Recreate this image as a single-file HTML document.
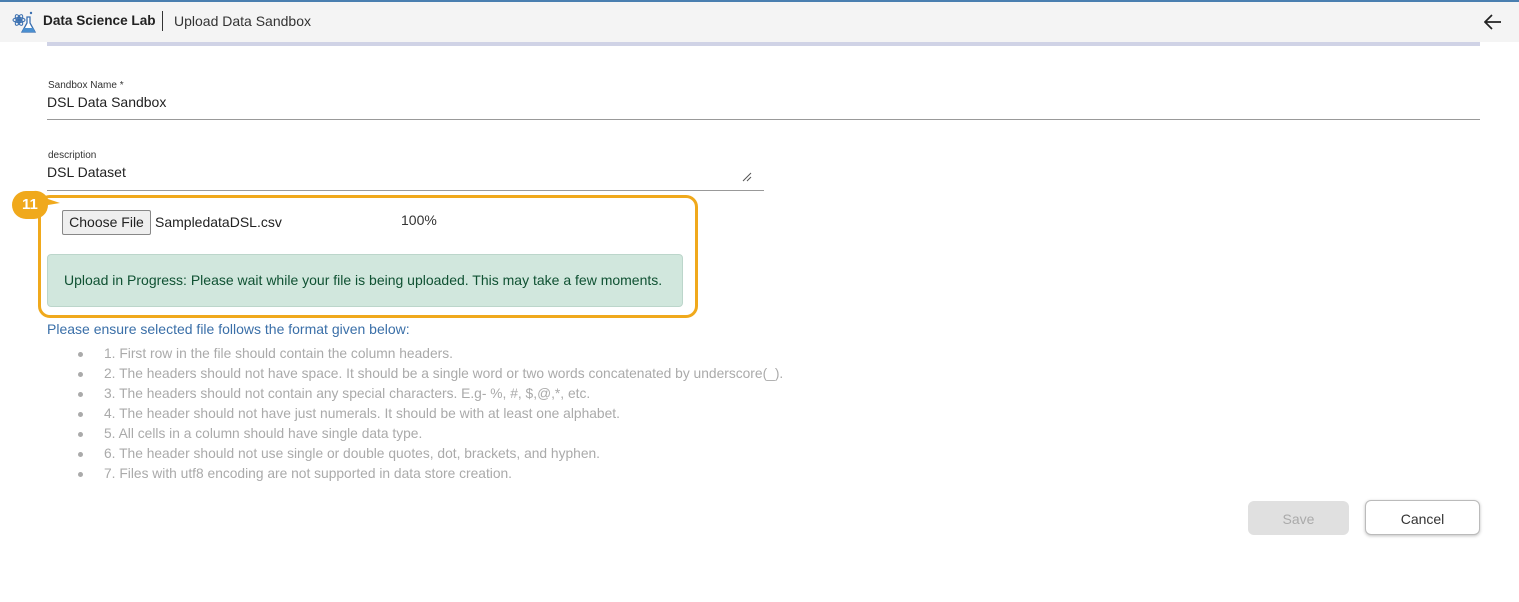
<!DOCTYPE html>
<html><head><meta charset="utf-8"><style>
*{margin:0;padding:0;box-sizing:border-box}
body{width:1519px;height:602px;background:#fff;font-family:"Liberation Sans",sans-serif;position:relative;overflow:hidden;color:#222}
.hdr{position:absolute;left:0;top:0;width:1519px;height:42px;background:#f4f4f4;border-top:2px solid #4a7fb0}
.lav{position:absolute;left:47px;top:42px;width:1433px;height:4px;background:#d0d3e6}
.ab{position:absolute;white-space:nowrap}
.line{position:absolute;height:1px;background:#999}
.lbl{font-size:10px;color:#333}
.val{font-size:14px;color:#222}
li{list-style:none;position:relative;margin-left:-28px;padding-left:28px;height:20px;line-height:20px;font-size:13.8px;color:#aaa}
li:before{content:"";position:absolute;left:2px;top:8px;width:5px;height:5px;border-radius:50%;background:#aaa}
</style></head><body>
<div class="hdr"></div>
<div class="lav"></div>
<svg class="ab" style="left:12px;top:10px" width="26" height="26" viewBox="0 0 26 26">
<circle cx="7" cy="10" r="2" fill="#3a6fb0"/><ellipse cx="7" cy="10" rx="6" ry="2.5" fill="none" stroke="#3a6fb0" stroke-width="1"/><ellipse cx="7" cy="10" rx="6" ry="2.5" fill="none" stroke="#3a6fb0" stroke-width="1" transform="rotate(60 7 10)"/><ellipse cx="7" cy="10" rx="6" ry="2.5" fill="none" stroke="#3a6fb0" stroke-width="1" transform="rotate(-60 7 10)"/>
<path d="M15 7v6l-5 9h13l-5-9V7z" fill="#fff" stroke="#3a6fb0" stroke-width="1.3"/><path d="M12 18h9l2 4H10z" fill="#4a8fd0"/><circle cx="19" cy="3" r="1.2" fill="#3a6fb0"/></svg>
<div class="ab" style="left:43px;top:13px;font-size:13.6px;font-weight:bold;color:#222">Data Science Lab</div>
<div class="ab" style="left:162px;top:11px;width:1px;height:20px;background:#333"></div>
<div class="ab" style="left:174px;top:13px;font-size:14px;color:#333">Upload Data Sandbox</div>
<svg class="ab" style="left:1484px;top:14px" width="18" height="16" viewBox="0 0 18 16"><path d="M17 8H2M8 1L1 8l7 7" fill="none" stroke="#222" stroke-width="1.7"/></svg>

<div class="ab lbl" style="left:48px;top:80px">Sandbox Name *</div>
<div class="ab val" style="left:47px;top:94px">DSL Data Sandbox</div>
<div class="line" style="left:47px;top:119px;width:1433px"></div>

<div class="ab lbl" style="left:48px;top:150px">description</div>
<div class="ab val" style="left:47px;top:164px">DSL Dataset</div>
<svg class="ab" style="left:742px;top:172px" width="10" height="10"><path d="M1 9L9 1M5 9L9 5" stroke="#555" stroke-width="1"/></svg>
<div class="line" style="left:47px;top:190px;width:717px"></div>

<div class="ab" style="left:38px;top:195px;width:660px;height:123px;border:3px solid #f0a91c;border-radius:12px"></div>
<svg class="ab" style="left:10px;top:189px" width="55" height="32"><path d="M16 2h8a14 14 0 0 1 14 8l12 4l-12 2a14 14 0 0 1-14 14h-8A14 14 0 0 1 16 2z" fill="#f0a91c"/></svg>
<div class="ab" style="left:22px;top:196px;font-size:15px;font-weight:bold;color:#fff">11</div>

<div class="ab" style="left:62px;top:210px;width:89px;height:25px;background:#efefef;border:1px solid #888;border-radius:2px;font-size:14px;line-height:23px;text-align:center;color:#222">Choose File</div>
<div class="ab" style="left:155px;top:214px;font-size:14px;color:#222">SampledataDSL.csv</div>
<div class="ab" style="left:401px;top:212px;font-size:14px;color:#333">100%</div>
<div class="ab" style="left:47px;top:254px;width:636px;height:53px;background:#d1e7dd;border:1px solid #bcd6cb;border-radius:4px;font-size:14px;line-height:51px;padding-left:16px;color:#0f5132">Upload in Progress: Please wait while your file is being uploaded. This may take a few moments.</div>

<div class="ab" style="left:47px;top:321px;font-size:14px;color:#3a6fa8">Please ensure selected file follows the format given below:</div>
<ul class="ab" style="left:104px;top:344px">
<li>1. First row in the file should contain the column headers.</li>
<li>2. The headers should not have space. It should be a single word or two words concatenated by underscore(_).</li>
<li>3. The headers should not contain any special characters. E.g- %, #, $,@,*, etc.</li>
<li>4. The header should not have just numerals. It should be with at least one alphabet.</li>
<li>5. All cells in a column should have single data type.</li>
<li>6. The header should not use single or double quotes, dot, brackets, and hyphen.</li>
<li>7. Files with utf8 encoding are not supported in data store creation.</li>
</ul>

<div class="ab" style="left:1248px;top:501px;width:101px;height:34px;background:#e0e0e0;border-radius:6px;font-size:14px;line-height:36px;text-align:center;color:#aaa">Save</div>
<div class="ab" style="left:1365px;top:500px;width:115px;height:35px;background:#fff;border:1px solid #bbb;border-radius:6px;box-shadow:0 1px 3px rgba(0,0,0,.25);font-size:14px;line-height:36px;text-align:center;color:#333">Cancel</div>
</body></html>
